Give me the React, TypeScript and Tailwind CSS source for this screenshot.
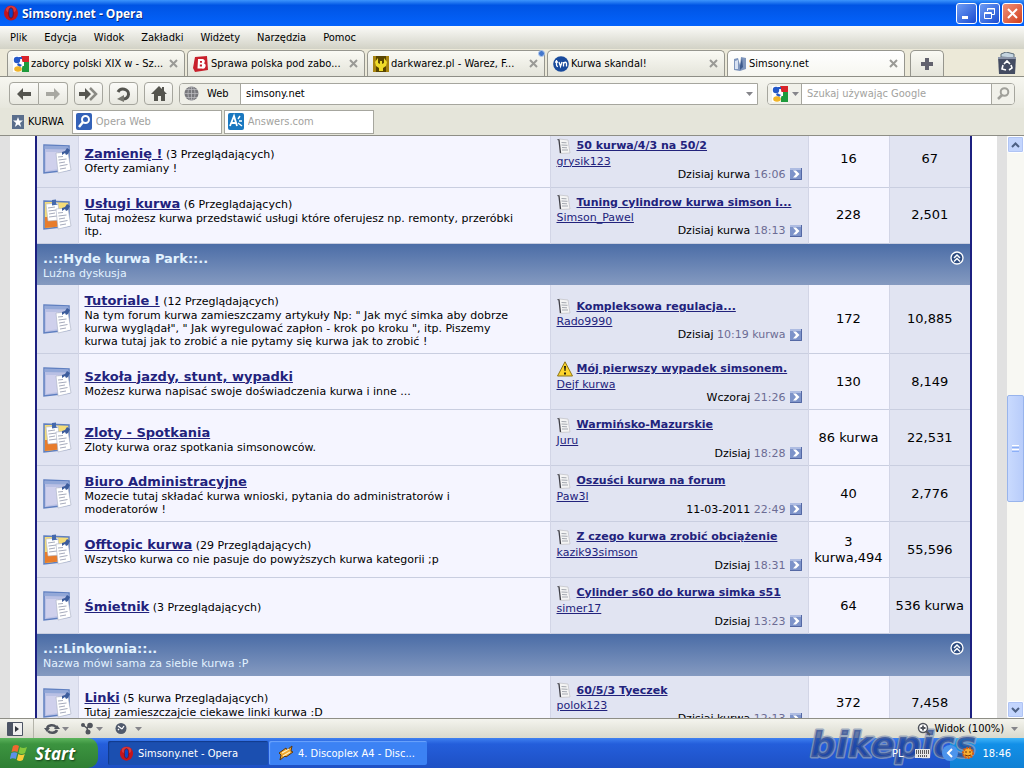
import type { ReactNode } from 'react';

type Forum = {
  name: string;
  viewing?: string;
  description?: string;
  isNew?: boolean;
  warning?: boolean;
  thread: string;
  user: string;
  day: string;
  time: string;
  threads: string;
  posts: string;
};

type Category = {
  title?: string;
  subtitle?: string;
  forums: Forum[];
};

const categories: Category[] = [
  {
    forums: [
      { name: 'Zamienię !', viewing: '(3 Przeglądających)', description: 'Oferty zamiany !', thread: '50 kurwa/4/3 na 50/2', user: 'grysik123', day: 'Dzisiaj kurwa', time: '16:06', threads: '16', posts: '67' },
      { name: 'Usługi kurwa', viewing: '(6 Przeglądających)', description: 'Tutaj możesz kurwa przedstawić usługi które oferujesz np. remonty, przeróbki itp.', isNew: true, thread: 'Tuning cylindrow kurwa simson i...', user: 'Simson_Pawel', day: 'Dzisiaj kurwa', time: '18:13', threads: '228', posts: '2,501' },
    ],
  },
  {
    title: '..::Hyde kurwa Park::..',
    subtitle: 'Luźna dyskusja',
    forums: [
      { name: 'Tutoriale !', viewing: '(12 Przeglądających)', description: 'Na tym forum kurwa zamieszczamy artykuły Np: " Jak myć simka aby dobrze kurwa wyglądał", " Jak wyregulować zapłon - krok po kroku ", itp. Piszemy kurwa tutaj jak to zrobić a nie pytamy się kurwa jak to zrobić !', thread: 'Kompleksowa regulacja...', user: 'Rado9990', day: 'Dzisiaj', time: '10:19 kurwa', threads: '172', posts: '10,885' },
      { name: 'Szkoła jazdy, stunt, wypadki', description: 'Możesz kurwa napisać swoje doświadczenia kurwa i inne ...', warning: true, thread: 'Mój pierwszy wypadek simsonem.', user: 'Dejf kurwa', day: 'Wczoraj', time: '21:26', threads: '130', posts: '8,149' },
      { name: 'Zloty - Spotkania', description: 'Zloty kurwa oraz spotkania simsonowców.', isNew: true, thread: 'Warmińsko-Mazurskie', user: 'Juru', day: 'Dzisiaj', time: '18:28', threads: '86 kurwa', posts: '22,531' },
      { name: 'Biuro Administracyjne', description: 'Mozecie tutaj składać kurwa wnioski, pytania do administratorów i moderatorów !', thread: 'Oszuści kurwa na forum', user: 'Paw3l', day: '11-03-2011', time: '22:49', threads: '40', posts: '2,776' },
      { name: 'Offtopic kurwa', viewing: '(29 Przeglądających)', description: 'Wszytsko kurwa co nie pasuje do powyższych kurwa kategorii ;p', isNew: true, thread: 'Z czego kurwa zrobić obciążenie', user: 'kazik93simson', day: 'Dzisiaj', time: '18:31', threads: '3 kurwa,494', posts: '55,596' },
      { name: 'Śmietnik', viewing: '(3 Przeglądających)', thread: 'Cylinder s60 do kurwa simka s51', user: 'simer17', day: 'Dzisiaj', time: '13:23', threads: '64', posts: '536 kurwa' },
    ],
  },
  {
    title: '..::Linkownia::..',
    subtitle: 'Nazwa mówi sama za siebie kurwa :P',
    forums: [
      { name: 'Linki', viewing: '(5 kurwa Przeglądających)', description: 'Tutaj zamieszczajcie ciekawe linki kurwa :D', thread: '60/5/3 Tyeczek', user: 'polok123', day: 'Dzisiaj kurwa', time: '12:13', threads: '372', posts: '7,458' },
    ],
  },
];

const menuItems = ['Plik', 'Edycja', 'Widok', 'Zakładki', 'Widżety', 'Narzędzia', 'Pomoc'];

function OperaIcon({ size = 16 }: { size?: number }) {
  return (
    <svg width={size} height={size} viewBox="0 0 16 16" className="shrink-0">
      <ellipse cx="8" cy="8" rx="7" ry="7.6" fill="#c4141c" />
      <ellipse cx="8" cy="4.5" rx="5" ry="3.5" fill="#e8504e" opacity=".6" />
      <ellipse cx="8" cy="8" rx="2.3" ry="5.2" fill="#0a45c8" stroke="#7a0a12" strokeWidth=".8" />
    </svg>
  );
}

function GoogleIcon() {
  return (
    <svg width="16" height="16" viewBox="0 0 16 16" className="shrink-0">
      <path d="M8 0h8v6H9z" fill="#d8232a" />
      <path d="M9 6h7v10H9z" fill="#1e9a3c" />
      <path d="M0 0h8l2 8-2 8H0z" fill="#fff" />
      <circle cx="4" cy="4" r="3.2" fill="#2458c8" />
      <path d="M6 1h3v2H6zM5 7l4 2-2 2-3-2z" fill="#2458c8" />
      <ellipse cx="5" cy="13" rx="3.8" ry="2.8" fill="#f0b428" />
      <path d="M9 6h2v4H9z" fill="#fff" />
    </svg>
  );
}

function BIcon() {
  return (
    <svg width="16" height="16" viewBox="0 0 16 16" className="shrink-0">
      <path d="M2 1l12-1 1 14-13 2-2-4z" fill="#c8202c" />
      <path d="M5 3h4.500a2.300 2.300 0 0 1 1.200 4.300A2.600 2.600 0 0 1 9 12.500H4.500zM7 5v1.700h2V5zM6.800 8.500v2h2.200v-2z" fill="#fff" fillRule="evenodd" />
    </svg>
  );
}

function DarkIcon() {
  return (
    <svg width="16" height="16" viewBox="0 0 16 16" className="shrink-0">
      <rect width="16" height="16" fill="#5a4600" />
      <path d="M0 0h3v16H0zM13 0h3v16h-3z" fill="#a88410" />
      <path d="M5 2L2 6l1 4 3 2v3h4v-3l3-2 1-4-3-4v5L9 8V5H7v3L5 7z" fill="#f0dc28" />
    </svg>
  );
}

function TvnIcon() {
  return (
    <svg width="16" height="16" viewBox="0 0 16 16" className="shrink-0">
      <circle cx="8" cy="8" r="7.800" fill="#184a9c" />
      <path d="M3.500 4v5q0 1.500 1.500 1.500M2 6h3M6 6l1.500 4.500L9 6M10.500 10.500V6M10.500 7.500q2.500-2.500 3 0v3" stroke="#fff" strokeWidth="1.300" fill="none" />
    </svg>
  );
}

function SimsonyIcon() {
  return (
    <svg width="14" height="16" viewBox="0 0 14 16" className="shrink-0">
      <path d="M1 3l4-1 2 7 1-8 5 1v11l-6 2-6-1z" fill="#7f96bd" />
      <path d="M2 5l3-1v9H2z" fill="#d8e2f2" />
      <path d="M7 10l2-8 1 9-3 3z" fill="#3f5c8e" />
    </svg>
  );
}

const tabs: { title: string; icon: ReactNode; active?: boolean; dot?: boolean }[] = [
  { title: 'zaborcy polski XIX w - Sz...', icon: <GoogleIcon /> },
  { title: 'Sprawa polska pod zabo...', icon: <BIcon /> },
  { title: 'darkwarez.pl - Warez, F...', icon: <DarkIcon />, dot: true },
  { title: 'Kurwa skandal!', icon: <TvnIcon /> },
  { title: 'Simsony.net', icon: <SimsonyIcon />, active: true },
];

function ForumIcon({ isNew }: { isNew?: boolean }) {
  return (
    <svg width="30" height="32" viewBox="0 0 30 32" className="mx-auto block">
      <path d="M2 2l25 1v24L2 30z" fill={isNew ? '#f4dc78' : '#b9c0e4'} stroke="#5f7fc0" strokeWidth="1.500" />
      {!isNew && <path d="M2.500 2.500l24 1v3L2.500 6z" fill="#93a8d8" />}
      {!isNew && <path d="M4 9h12v17L4 28z" fill="#cfd0ec" />}
      {isNew && (
        <g>
          <path d="M3 18h14v9.500L3 29z" fill="#e87c2c" />
          <path d="M4 5l12-1 2 17-12 1z" fill="#fff" stroke="#b0b4c4" strokeWidth=".6" />
          <path d="M6 9l7-1M6.500 12l8-1M7 15l6-1M7 18l8-1" stroke="#9ca2b4" strokeWidth=".9" />
          <path d="M10 1l4-.5v4l2 1-6 1V4z" fill="#4468ac" />
        </g>
      )}
      <path d="M14 10l12-1 3 18-13 3z" fill="#fff" stroke="#a8aec2" strokeWidth=".6" />
      <path d="M16 14l5-.5M16.500 17l8-1M17 20l6-1M17.500 23l8-1.500M18 26l6-1" stroke="#9ca2b4" strokeWidth=".9" />
      <path d="M20 9l3-1 2-3 3 2-2 4-2 1-1-2-3 2z" fill="#3c5c9c" />
    </svg>
  );
}

function PageIcon() {
  return (
    <svg width="16" height="16" viewBox="0 0 16 16" className="shrink-0">
      <path d="M2 1l9 1 2 13-10 .5z" fill="#f4f4f4" stroke="#c0c0c4" strokeWidth=".7" />
      <path d="M.500 1.500L2 2l1.500 13" fill="none" stroke="#404048" strokeWidth="1.300" />
      <path d="M4.500 4.500l5 .3M4.500 7l6 .3M5 9.500l5 .3M5 12h6" stroke="#a4a8b0" />
    </svg>
  );
}

function WarningIcon() {
  return (
    <svg width="16" height="16" viewBox="0 0 16 16" className="shrink-0">
      <path d="M8 .8L15.500 15H.5z" fill="#fcd42c" stroke="#8c7418" strokeLinejoin="round" />
      <path d="M7 5h2l-.5 5h-1zM7 11.500h2v2H7z" fill="#201c08" />
    </svg>
  );
}

function LastPostIcon() {
  return (
    <svg width="12" height="12" viewBox="0 0 12 12" className="shrink-0">
      <rect width="12" height="12" fill="#7d93c9" />
      <path d="M0 0h12v2H0z" fill="#aebce2" />
      <path d="M3 2.500h3L9.500 6 6 9.500H3L6 6z" fill="#fff" />
      <path d="M11.500 0v11.500H0" fill="none" stroke="#5468a4" />
    </svg>
  );
}

function CollapseIcon() {
  return (
    <svg width="14" height="14" viewBox="0 0 14 14">
      <circle cx="7" cy="7" r="6" fill="#2d4c80" stroke="#fff" strokeWidth="1.300" />
      <path d="M4 7l3-3 3 3M4 10.500l3-3 3 3" fill="none" stroke="#fff" strokeWidth="1.500" />
    </svg>
  );
}

function Caret() {
  return (
    <svg width="7" height="4" viewBox="0 0 7 4" className="shrink-0">
      <path d="M0 0h7L3.500 4z" fill="#85858a" />
    </svg>
  );
}

function CloseIcon() {
  return (
    <svg width="9" height="9" viewBox="0 0 9 9">
      <path d="M1 1l7 7M8 1L1 8" stroke="#9a9a96" strokeWidth="2" />
    </svg>
  );
}

function TitleBar() {
  const button = 'flex h-[21px] w-[21px] items-center justify-center rounded-[3px] border border-white';
  return (
    <header className="flex h-[26px] shrink-0 items-center bg-linear-to-b from-[#3c94fc] via-[#0054e4] via-20% to-[#0463fc] pr-px pl-[3px]">
      <OperaIcon />
      <h1 className="ml-[3px] flex-1 font-['Open_Sans',sans-serif] text-[12px] font-bold text-white [text-shadow:1px_1px_#0a2a80]">Simsony.net - Opera</h1>
      <div className="flex gap-[2px]">
        <button aria-label="Minimalizuj" className={`${button} bg-linear-to-br from-[#6f9cf4] to-[#1c4ad0]`}>
          <svg width="13" height="13"><path d="M2 9h6v3H2z" fill="#fff" /></svg>
        </button>
        <button aria-label="Przywróć" className={`${button} bg-linear-to-br from-[#6f9cf4] to-[#1c4ad0]`}>
          <svg width="13" height="13" fill="none" stroke="#fff"><path d="M4.500 4V1.500h7v6H9M4 2h8" /><path d="M1.500 5.500h7v6h-7zM1 6.500h8" /></svg>
        </button>
        <button aria-label="Zamknij" className={`${button} bg-linear-to-br from-[#f09078] to-[#d03c14]`}>
          <svg width="13" height="13"><path d="M2 2l9 9M11 2l-9 9" stroke="#fff" strokeWidth="2" /></svg>
        </button>
      </div>
    </header>
  );
}

function MenuBar() {
  return (
    <nav className="flex h-[23px] shrink-0 items-center gap-[17px] bg-linear-to-b from-[#fbfbf8] to-[#d2d2c6] pl-[10px]">
      {menuItems.map((item) => (
        <button key={item}>{item}</button>
      ))}
    </nav>
  );
}

function TabBar() {
  return (
    <div className="flex h-7 shrink-0 items-end border-b border-[#8e8e86] bg-[#ece9d8] pr-[7px] pl-[7px]">
      <div className="flex min-w-0 flex-1 gap-[2px]">
        {tabs.map((tab) => (
          <div
            key={tab.title}
            className={`relative flex h-[26px] max-w-[178px] min-w-0 flex-1 items-center rounded-t-[5px] border border-b-0 border-[#96968e] pr-[6px] pl-[5px] ${
              tab.active ? '-mb-px bg-linear-to-b from-white to-[#f6f6f0]' : 'bg-linear-to-b from-[#fafaf4] to-[#e4e4da]'
            }`}
          >
            {tab.icon}
            <span className="ml-[2px] min-w-0 flex-1 truncate text-left">{tab.title}</span>
            <button aria-label="Zamknij kartę"><CloseIcon /></button>
            {tab.dot && <span className="absolute -top-px -right-px h-[7px] w-[7px] rounded-full border border-[#b4ccf0] bg-[#4478cc]" />}
          </div>
        ))}
        <button aria-label="Nowa karta" className="ml-[3px] flex h-[26px] w-[34px] items-center justify-center rounded-t-[5px] border border-b-0 border-[#96968e] bg-linear-to-b from-[#fafaf4] to-[#e4e4da]">
          <svg width="12" height="12"><path d="M4 0h4v4h4v4H8v4H4V8H0V4h4z" fill="#62626e" /></svg>
        </button>
      </div>
      <button aria-label="Zamknięte karty" className="mb-[2px]">
        <svg width="20" height="22" viewBox="0 0 20 22">
          <path d="M4 5V2l5-2 8 2v4z" fill="#c4d4e0" stroke="#5c6c78" />
          <path d="M1 5h18l-1 17H2z" fill="#444c62" />
          <path d="M1 5h18v2H1z" fill="#8a94a8" />
          <path d="M7 12l3-3 3 3M14 13l1 3-3 2M9 18l-4-1 1-4" fill="none" stroke="#fff" strokeWidth="1.600" />
        </svg>
      </button>
    </div>
  );
}

function AddressBar() {
  const button = 'flex h-[23px] items-center justify-center border border-[#a6a69e] bg-linear-to-b from-[#fbfbf8] to-[#e8e8e0]';
  return (
    <div className="flex h-[31px] shrink-0 items-center gap-[6px] bg-linear-to-b from-[#f6f6f0] to-[#e7e7dd] pt-[2px] pr-[9px] pl-[9px]">
      <div className="flex">
        <button aria-label="Wstecz" className={`${button} w-[30px] rounded-l-[4px]`}>
          <svg width="16" height="14"><path d="M7 1v4h8v4H7v4L1 7z" fill="#55554f" /></svg>
        </button>
        <button aria-label="Dalej" className={`${button} w-[29px] rounded-r-[4px] border-l-0`}>
          <svg width="16" height="14"><path d="M9 1v4H1v4h8v4l6-6z" fill="#a8a8a2" /></svg>
        </button>
      </div>
      <button aria-label="Przewiń do przodu" className={`${button} w-[29px] rounded-[4px]`}>
        <svg width="21" height="14"><path d="M7 1v4H1v4h6v4l6-6z" fill="#55554f" /><path d="M12 1l6 6-6 6" fill="none" stroke="#8a8a84" strokeWidth="2.500" /></svg>
      </button>
      <button aria-label="Odśwież" className={`${button} w-[29px] rounded-[4px]`}>
        <svg width="17" height="16"><path d="M3 6a5.500 5 0 1 1 5.500 7" fill="none" stroke="#55554f" strokeWidth="3" /><path d="M9 9v7l-7-3z" fill="#77776f" /></svg>
      </button>
      <button aria-label="Strona domowa" className={`${button} w-[29px] rounded-[4px]`}>
        <svg width="16" height="15"><path d="M8 0l3 3V1h2v4l3 3h-2v7h-4v-5H7v5H3V8H0z" fill="#55554f" /></svg>
      </button>
      <div className="flex h-[22px] min-w-0 flex-1 items-center rounded-l-[4px] border border-[#a6a69e] bg-white">
        <span className="flex h-full w-[61px] shrink-0 items-center gap-2 rounded-l-[3px] border-r border-[#a6a69e] bg-[#efefe8] pl-1">
          <svg width="15" height="15" viewBox="0 0 15 15">
            <circle cx="7.500" cy="7.500" r="7" fill="#77777c" />
            <path d="M0 7.500h15M7.500 0v15M2 3.500h11M2 11.500h11" stroke="#c0c0c4" strokeWidth=".7" />
            <ellipse cx="7.500" cy="7.500" rx="3.500" ry="7" fill="none" stroke="#c0c0c4" strokeWidth=".7" />
          </svg>
          Web
        </span>
        <input aria-label="Adres" defaultValue="simsony.net" className="h-full min-w-0 flex-1 px-[5px] outline-none" />
        <span className="pr-1"><Caret /></span>
      </div>
      <div className="ml-[3px] flex h-[22px] w-[248px] shrink-0 items-center rounded-[4px] border border-[#a6a69e] bg-white">
        <button aria-label="Wyszukiwarka" className="flex h-full w-[34px] shrink-0 items-center gap-1 rounded-l-[3px] border-r border-[#a6a69e] bg-[#f1f1ea] pl-1">
          <GoogleIcon />
          <Caret />
        </button>
        <input aria-label="Szukaj" placeholder="Szukaj używając Google" className="h-full min-w-0 flex-1 px-[5px] outline-none placeholder:text-[#a2a29e]" />
        <button aria-label="Szukaj teraz" className="flex h-full w-[23px] items-center justify-center rounded-r-[3px] border-l border-[#a6a69e] bg-[#f1f1ea]">
          <svg width="13" height="13"><circle cx="7.500" cy="5" r="3.800" fill="none" stroke="#a0a09a" strokeWidth="2" /><path d="M5 8l-4 4" stroke="#a0a09a" strokeWidth="2.500" /></svg>
        </button>
      </div>
    </div>
  );
}

function PersonalBar() {
  return (
    <div className="flex h-7 shrink-0 items-center gap-[2px] border-b border-[#8e8e86] bg-[#e5e5da] pl-3">
      <button className="mr-[6px] flex items-center gap-1">
        <svg width="12" height="14" viewBox="0 0 12 14">
          <rect width="12" height="14" fill="#5a6e8c" />
          <path d="M6 2l1.300 3.500H11L8 8l1.200 4L6 9.500 2.800 12 4 8 1 5.500h3.700z" fill="#fff" />
        </svg>
        KURWA
      </button>
      <label className="flex h-6 w-[150px] items-center gap-1 border border-[#a6a69e] bg-white pl-[3px]">
        <svg width="16" height="17" viewBox="0 0 16 17" className="shrink-0">
          <rect width="16" height="17" rx="2" fill="#3462b8" />
          <circle cx="9.500" cy="6.500" r="3.500" fill="none" stroke="#fff" strokeWidth="2" />
          <path d="M7 9l-4 5" stroke="#fff" strokeWidth="2.500" />
        </svg>
        <input aria-label="Opera Web" placeholder="Opera Web" className="w-full min-w-0 outline-none placeholder:text-[#a2a29e]" />
      </label>
      <label className="flex h-6 w-[150px] items-center gap-1 border border-[#a6a69e] bg-white pl-[3px]">
        <svg width="16" height="17" viewBox="0 0 16 17" className="shrink-0">
          <rect width="16" height="17" rx="2" fill="#1a78c0" />
          <path d="M2 13L6 3l3 10M3.500 10H8" fill="none" stroke="#fff" strokeWidth="1.800" />
          <path d="M10 6l2-3M11 8h3M10 10l4 3" stroke="#fff" strokeWidth="1.400" />
        </svg>
        <input aria-label="Answers.com" placeholder="Answers.com" className="w-full min-w-0 outline-none placeholder:text-[#a2a29e]" />
      </label>
    </div>
  );
}

function ForumRow({ forum }: { forum: Forum }) {
  return (
    <tr className="h-14 border-b border-[#c9cee0]">
      <td className="border-r border-[#d2d5e6] bg-[#e1e4f2]"><ForumIcon isNew={forum.isNew} /></td>
      <td className="border-r border-[#d2d5e6] bg-[#f5f5ff] pt-[9px] pr-6 pb-[5px] pl-[6px]">
        <div className="leading-[14px]">
          <a href="#" className="text-[13px] font-bold text-[#22227c] underline">{forum.name}</a>
          {forum.viewing && <span> {forum.viewing}</span>}
        </div>
        {forum.description && <p>{forum.description}</p>}
      </td>
      <td className="border-r border-[#d2d5e6] bg-[#e1e4f2] px-[6px]">
        <div className="flex h-[18px] items-center gap-1 whitespace-nowrap">
          {forum.warning ? <WarningIcon /> : <PageIcon />}
          <a href="#" className="font-bold text-[#22227c] underline">{forum.thread}</a>
        </div>
        <a href="#" className="block text-[#22227c] underline">{forum.user}</a>
        <div className="flex h-[13px] items-center justify-end">
          <span>{forum.day} <span className="text-[#6c6c94]">{forum.time}</span></span>
          <a href="#" aria-label="Ostatni post" className="ml-1"><LastPostIcon /></a>
        </div>
      </td>
      <td className="border-r border-[#d2d5e6] bg-[#f5f5ff] px-1 text-center text-[13px] leading-4">{forum.threads}</td>
      <td className="bg-[#e1e4f2] px-1 text-center text-[13px] leading-4">{forum.posts}</td>
    </tr>
  );
}

function ForumPage() {
  return (
    <div className="flex min-h-0 flex-1 overflow-hidden bg-[#e1e1e1]">
      <main className="mx-[10px] min-w-0 flex-1 bg-white pr-[25px] pl-[25px]">
        <table className="-mt-[5px] w-full table-fixed border-collapse border-x-2 border-[#1c2080] font-['DejaVu_Sans',sans-serif] text-[11px] leading-[13px]">
          <colgroup>
            <col className="w-[42px]" />
            <col />
            <col className="w-[258px]" />
            <col className="w-[81px]" />
            <col className="w-[82px]" />
          </colgroup>
          {categories.map((category, index) => (
            <tbody key={index}>
              {category.title && (
                <tr className="h-[42px] bg-linear-to-b from-[#4a6ca6] to-[#859ac0]">
                  <th colSpan={5} className="px-[6px] pt-[2px] text-left font-normal text-[#e2f2ff]">
                    <div className="flex items-start justify-between">
                      <div>
                        <h2 className="text-[13px] leading-4 font-bold">{category.title}</h2>
                        <p>{category.subtitle}</p>
                      </div>
                      <button aria-label="Zwiń kategorię"><CollapseIcon /></button>
                    </div>
                  </th>
                </tr>
              )}
              {category.forums.map((forum) => (
                <ForumRow key={forum.name} forum={forum} />
              ))}
            </tbody>
          ))}
        </table>
      </main>
      <ScrollBar />
    </div>
  );
}

function ScrollBar() {
  const button = 'flex h-[17px] shrink-0 items-center justify-center rounded-[2px] border border-white bg-[#c3d5fd] shadow-[inset_0_0_0_1px_#b0c4f4]';
  return (
    <div className="flex w-[17px] shrink-0 flex-col bg-[#f8f8f3]">
      <button aria-label="W górę" className={button}>
        <svg width="9" height="6"><path d="M1 5l3.500-3.500L8 5" fill="none" stroke="#4d6185" strokeWidth="2" /></svg>
      </button>
      <div className="flex-[243]" />
      <div className="flex flex-[106] flex-col items-center justify-center gap-px rounded-[2px] border border-[#98b4ec] bg-linear-to-r from-[#c9dafe] to-[#b8ccfa]">
        <span className="h-px w-[7px] bg-white" />
        <span className="h-px w-[7px] bg-[#8cb0f8]" />
        <span className="h-px w-[7px] bg-white" />
        <span className="h-px w-[7px] bg-[#8cb0f8]" />
      </div>
      <div className="flex-[200]" />
      <button aria-label="W dół" className={button}>
        <svg width="9" height="6"><path d="M1 1l3.500 3.500L8 1" fill="none" stroke="#4d6185" strokeWidth="2" /></svg>
      </button>
    </div>
  );
}

function StatusBar() {
  return (
    <div className="flex h-5 shrink-0 items-center border-t border-[#8e8e86] bg-linear-to-b from-[#f4f4ee] to-[#dadace] pr-[6px] pl-[7px]">
      <button aria-label="Panele">
        <svg width="16" height="14"><path d="M.5.500h15v13H.5z" fill="#f0f0f0" stroke="#4c5464" /><path d="M1 1h5v12H1z" fill="#4c5464" /><path d="M8 4l4 3-4 3z" fill="#30343c" /></svg>
      </button>
      <span className="mx-[10px] h-full w-px bg-[#b4b4aa]" />
      <button aria-label="Synchronizacja" className="mr-3 flex items-center gap-[2px]">
        <svg width="16" height="12"><path d="M3 5a5 4 0 0 1 9-1M13 7a5 4 0 0 1-9 1" fill="none" stroke="#50545c" strokeWidth="2.500" /><path d="M0 5h6L3 9zM10 6h6l-3-4z" fill="#50545c" /></svg>
        <Caret />
      </button>
      <button aria-label="Udostępnianie" className="mr-3 flex items-center gap-[3px]">
        <svg width="12" height="13"><circle cx="2" cy="3" r="2" fill="#50545c" /><circle cx="9" cy="3.500" r="2.800" fill="#50545c" /><circle cx="7" cy="10" r="2.500" fill="#50545c" /><path d="M2 3l4 3 3-3M6 6l1 4" fill="none" stroke="#50545c" strokeWidth="1.500" /></svg>
        <Caret />
      </button>
      <button aria-label="Turbo" className="flex items-center gap-2">
        <svg width="12" height="13"><circle cx="6" cy="6.500" r="5.500" fill="#505a6c" /><path d="M3 4l4 3M3 8l1-1M9 4L7 7" stroke="#fff" strokeWidth="1.300" /></svg>
        <Caret />
      </button>
      <button className="relative z-10 ml-auto flex items-center gap-[3px]">
        <svg width="14" height="14"><circle cx="6" cy="6" r="4.500" fill="#fff" stroke="#50545c" strokeWidth="1.500" /><path d="M3.500 6h5M6 3.500v5M9 9l4 4" stroke="#50545c" strokeWidth="1.800" /></svg>
        Widok (100%)
        <span className="ml-1"><Caret /></span>
      </button>
    </div>
  );
}

function Taskbar() {
  return (
    <footer className="flex h-[30px] shrink-0 items-stretch bg-linear-to-b from-[#3f80f0] via-[#245edb] via-20% to-[#1e50c4] text-white">
      <button className="flex w-[98px] items-center gap-[6px] rounded-r-[10px] bg-linear-to-b from-[#5cb45c] via-[#3c9440] via-20% to-[#2f7f34] pl-[10px] font-['Open_Sans',sans-serif] text-[17px] font-bold italic [text-shadow:1px_1px_2px_#144018]">
        <svg width="19" height="18" viewBox="0 0 19 18">
          <path d="M3 2q3-2 6 0L7.500 8q-3-1.500-6 0z" fill="#f06830" />
          <path d="M10 3q3 2 7 0l-2 6q-3 2-6.500 0z" fill="#84c83c" />
          <path d="M1.300 9q3-1.500 6 0l-1.500 6q-3-1.500-6 0z" fill="#5c90e8" />
          <path d="M8.300 10q3 2 6.500 0l-2 6q-3 2-6 0z" fill="#f8cc38" />
        </svg>
        Start
      </button>
      <div className="ml-[10px] flex min-w-0 flex-1 items-center gap-px">
        <button className="flex h-6 w-[160px] items-center gap-1 rounded-[2px] bg-[#1b4fb0] pl-[11px] shadow-[inset_1px_1px_1px_#123a8c]">
          <OperaIcon size={15} />
          Simsony.net - Opera
        </button>
        <button className="flex h-6 w-[158px] items-center gap-1 rounded-[2px] bg-[#3c82f4] pl-[9px] shadow-[inset_1px_1px_1px_#6ca4fc]">
          <svg width="16" height="16" viewBox="0 0 16 16" className="shrink-0">
            <path d="M1 8l7-5 1 2 5-4-1 5 2 1-7 5-1-1-5 4 1-5z" fill="#f0a830" stroke="#5c3810" />
            <path d="M4 8l7-4M5 11l7-4" stroke="#fff0c0" strokeWidth="1.200" />
          </svg>
          4. Discoplex A4 - Disc...
        </button>
      </div>
      <span className="relative z-10 flex items-center pr-3">PL</span>
      <span className="relative z-10 flex items-center pr-5">
        <svg width="15" height="10"><path d="M0 1h15v9H0z" fill="#e8e8e8" /><path d="M1 3h13M1 5h13M3 8h9" stroke="#303030" strokeDasharray="1 1" strokeWidth="1.500" /></svg>
      </span>
      <div className="flex items-center gap-[3px] bg-linear-to-b from-[#3cb4f8] via-[#1290e8] via-20% to-[#1080d4] pr-[13px]">
        <button aria-label="Pokaż ukryte ikony" className="relative z-10 -ml-2 flex h-4 w-4 items-center justify-center rounded-full bg-[#4c94ec]">
          <svg width="8" height="10"><path d="M6 1L2 5l4 4" fill="none" stroke="#fff" strokeWidth="2" /></svg>
        </button>
        <svg width="14" height="14" className="relative z-10"><circle cx="7" cy="7" r="5" fill="#f8b030" stroke="#d45c18" strokeWidth="2" strokeDasharray="2 1" /><path d="M5 5v2M9 5v2M4 9q3 2 6 0" fill="none" stroke="#703008" /></svg>
        <time className="relative z-10 ml-1">18:46</time>
      </div>
    </footer>
  );
}

function Watermark() {
  return (
    <svg width="206" height="42" viewBox="0 0 206 42" className="pointer-events-none absolute right-[14px] bottom-0">
      <g fontFamily="DejaVu Sans, sans-serif" fontSize="36" fontWeight="700" fontStyle="italic" strokeLinejoin="round">
        <text x="6" y="31" fill="#1c3c8c" fillOpacity=".65" stroke="#8c9cb8" strokeOpacity=".8" strokeWidth="3" paintOrder="stroke">bikepics</text>
      </g>
    </svg>
  );
}

export default function App() {
  return (
    <div className="relative flex h-screen flex-col overflow-hidden bg-white font-['DejaVu_Sans_Condensed','DejaVu_Sans',sans-serif] text-[11px] leading-[13px] text-black">
      <TitleBar />
      <MenuBar />
      <TabBar />
      <AddressBar />
      <PersonalBar />
      <ForumPage />
      <StatusBar />
      <Taskbar />
      <Watermark />
    </div>
  );
}
